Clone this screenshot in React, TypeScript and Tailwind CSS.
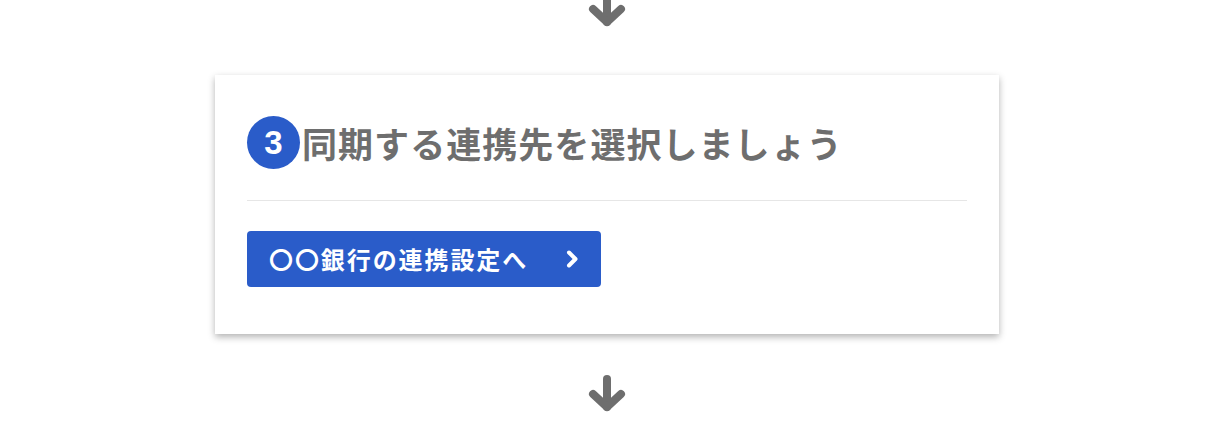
import React from "react";

const jp = "font-['Noto_Sans_CJK_JP','Noto_Sans',sans-serif]";

function ArrowDown({ className = "" }: { className?: string }) {
  return (
    <svg
      viewBox="0 0 40 40"
      className={className}
      fill="none"
      stroke="#6e6e6e"
      strokeWidth={8}
      strokeLinecap="round"
      strokeLinejoin="round"
    >
      <path d="M20 5 L20 33" />
      <path d="M6 20 L20 33 L34 20" />
    </svg>
  );
}

export default function App() {
  return (
    <div className={`w-[1214px] h-[438px] bg-white overflow-hidden flex flex-col items-center ${jp}`}>
      <ArrowDown className="w-10 h-10 -mt-[11px] shrink-0" />

      <div className="mt-[46px] w-[784px] bg-white shadow-[0_3px_7px_rgba(0,0,0,0.3)] px-8 pt-[41px] pb-[47px]">
        <div className="flex items-center">
          <span className="w-[53px] h-[53px] rounded-full bg-[#2a5cc9] text-white flex items-center justify-center text-[33px] font-bold leading-none font-['Liberation_Sans',sans-serif]">
            3
          </span>
          <h2 className="ml-[2px] text-[35px] leading-none font-bold tracking-[0.03em] text-[#6e6e6e]">
            同期する連携先を選択しましょう
          </h2>
        </div>

        <div className="mt-[31px] h-px bg-[#e6e6e6]" />

        <button className="mt-[30px] w-[354px] h-[56px] rounded-[4px] bg-[#2a5cc9] text-white flex items-center pl-[22px] pr-[22px]">
          <span className="text-[24px] font-bold tracking-[0.08em] leading-none">
            〇〇銀行の連携設定へ
          </span>
          <svg
            viewBox="0 0 14 18"
            className="ml-auto w-[14px] h-[18px]"
            fill="none"
            stroke="white"
            strokeWidth={4}
            strokeLinecap="round"
            strokeLinejoin="round"
          >
            <path d="M4 2.5 L10.5 9 L4 15.5" />
          </svg>
        </button>
      </div>

      <ArrowDown className="mt-[40px] w-10 h-10 shrink-0" />
    </div>
  );
}
